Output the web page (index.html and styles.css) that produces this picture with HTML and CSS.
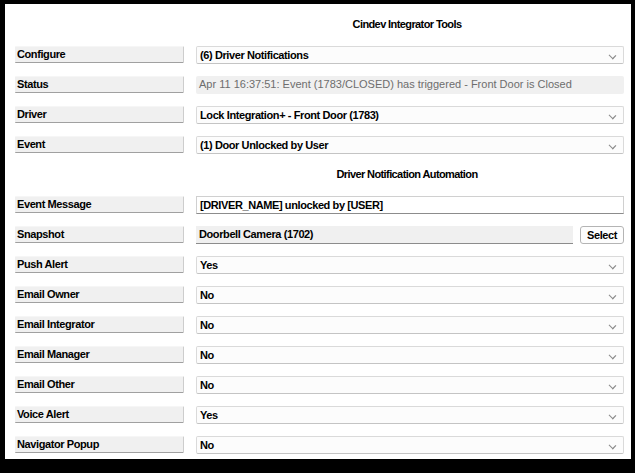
FILE: index.html
```html
<!DOCTYPE html>
<html>
<head>
    <meta charset="UTF-8"/>
    <title>Cindev Integrator Tools</title>
    <link rel="stylesheet" href="styles.css">
</head>
<body>
<div class="window">
    <div class="row">
        <div class="spacer"></div>
        <div class="title">Cindev Integrator Tools</div>
    </div>
    <div class="row">
        <div class="label">Configure</div>
        <div class="combo">(6) Driver Notifications<span class="arrow"></span></div>
    </div>
    <div class="row">
        <div class="label">Status</div>
        <div class="status">Apr 11 16:37:51: Event (1783/CLOSED) has triggered - Front Door is Closed</div>
    </div>
    <div class="row">
        <div class="label">Driver</div>
        <div class="combo">Lock Integration+ - Front Door (1783)<span class="arrow"></span></div>
    </div>
    <div class="row">
        <div class="label">Event</div>
        <div class="combo">(1) Door Unlocked by User<span class="arrow"></span></div>
    </div>
    <div class="row">
        <div class="spacer"></div>
        <div class="title">Driver Notification Automation</div>
    </div>
    <div class="row">
        <div class="label">Event Message</div>
        <div class="textbox">[DRIVER_NAME] unlocked by [USER]</div>
    </div>
    <div class="row">
        <div class="label">Snapshot</div>
        <div class="pick">
            <div class="readonly">Doorbell Camera (1702)</div>
            <div class="button">Select</div>
        </div>
    </div>
    <div class="row">
        <div class="label">Push Alert</div>
        <div class="combo">Yes<span class="arrow"></span></div>
    </div>
    <div class="row">
        <div class="label">Email Owner</div>
        <div class="combo">No<span class="arrow"></span></div>
    </div>
    <div class="row">
        <div class="label">Email Integrator</div>
        <div class="combo">No<span class="arrow"></span></div>
    </div>
    <div class="row">
        <div class="label">Email Manager</div>
        <div class="combo">No<span class="arrow"></span></div>
    </div>
    <div class="row">
        <div class="label">Email Other</div>
        <div class="combo">No<span class="arrow"></span></div>
    </div>
    <div class="row">
        <div class="label">Voice Alert</div>
        <div class="combo">Yes<span class="arrow"></span></div>
    </div>
    <div class="row">
        <div class="label">Navigator Popup</div>
        <div class="combo">No<span class="arrow"></span></div>
    </div>
</div>
</body>
</html>
```

FILE: styles.css
```css
*{
    margin: 0;
    padding: 0;
    box-sizing: border-box;
}
html, body{
    width: 635px;
    height: 473px;
    background: #000;
    overflow: hidden;
}
body{
    font-family: "Liberation Sans", Arial, sans-serif;
    font-size: 11px;
    font-weight: bold;
    letter-spacing: -0.4px;
    color: #000;
}
.window{
    margin: 4px 4px 0 5px;
    height: 455px;
    background: #fff;
    padding: 12px 7px 0 10px;
    display: flex;
    flex-direction: column;
    gap: 12px;
}
.row{
    display: grid;
    grid-template-columns: 169px 428px;
    column-gap: 12px;
    height: 18px;
}
.title{
    text-align: center;
    line-height: 16px;
    padding-right: 6px;
    letter-spacing: -0.6px;
}
.label{
    background: #f0f0f0;
    border-top: 1px solid #f6f6f6;
    border-bottom: 1px solid #a0a0a0;
    border-right: 1px solid #cdcdcd;
    border-radius: 1px;
    padding-left: 2px;
    line-height: 14px;
    height: 17px;
}
.combo{
    position: relative;
    background: #fcfcfc;
    border: 1px solid #dadada;
    border-bottom-color: #c4c4c4;
    border-radius: 2px;
    padding-left: 3px;
    line-height: 16px;
}
.arrow{
    position: absolute;
    right: 8px;
    top: 6px;
    width: 5px;
    height: 5px;
    border-right: 1px solid #8a8a8a;
    border-bottom: 1px solid #8a8a8a;
    transform: rotate(45deg) scaleX(1.2);
}
.status{
    background: #f0f0f0;
    color: #6d6d6d;
    font-weight: normal;
    letter-spacing: 0;
    padding-left: 3px;
    line-height: 17px;
    border-radius: 2px;
}
.textbox{
    background: #fff;
    border: 1px solid #d0d0d0;
    border-bottom-color: #8c8c8c;
    padding-left: 3px;
    line-height: 16px;
}
.pick{
    display: flex;
    gap: 7px;
}
.readonly{
    flex: 1;
    background: #f0f0f0;
    border-bottom: 1px solid #8c8c8c;
    padding-left: 3px;
    line-height: 17px;
}
.button{
    width: 44px;
    background: #fdfdfd;
    border: 1px solid #b4b4b4;
    border-radius: 3px;
    text-align: center;
    line-height: 16px;
}
```
